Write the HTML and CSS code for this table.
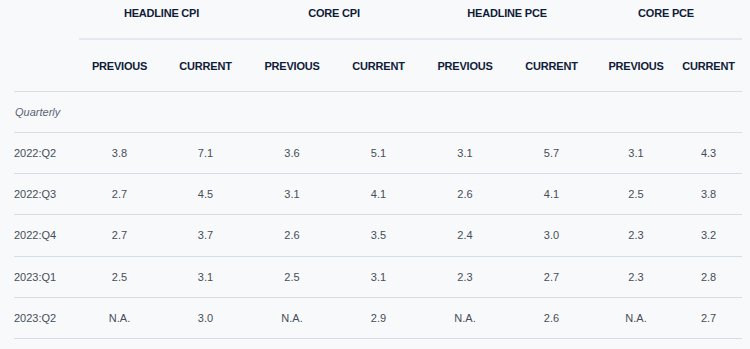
FILE: index.html
```html
<!DOCTYPE html>
<html>
<head>
<meta charset="utf-8">
<link rel="stylesheet" href="styles.css">
</head>
<body>
<div class="wrap">
<table class="infl">
<colgroup>
<col class="c0"><col class="c1"><col class="c2"><col class="c3"><col class="c4"><col class="c5"><col class="c6"><col class="c7"><col class="c8">
</colgroup>
<thead>
<tr class="grp">
<th class="blank"></th>
<th colspan="2">Headline CPI</th>
<th colspan="2">Core CPI</th>
<th colspan="2">Headline PCE</th>
<th colspan="2">Core PCE</th>
</tr>
<tr class="sub">
<th></th>
<th>Previous</th><th>Current</th>
<th>Previous</th><th>Current</th>
<th>Previous</th><th>Current</th>
<th>Previous</th><th>Current</th>
</tr>
</thead>
<tbody>
<tr class="sect"><td colspan="9">Quarterly</td></tr>
<tr><td>2022:Q2</td><td>3.8</td><td>7.1</td><td>3.6</td><td>5.1</td><td>3.1</td><td>5.7</td><td>3.1</td><td>4.3</td></tr>
<tr><td>2022:Q3</td><td>2.7</td><td>4.5</td><td>3.1</td><td>4.1</td><td>2.6</td><td>4.1</td><td>2.5</td><td>3.8</td></tr>
<tr><td>2022:Q4</td><td>2.7</td><td>3.7</td><td>2.6</td><td>3.5</td><td>2.4</td><td>3.0</td><td>2.3</td><td>3.2</td></tr>
<tr><td>2023:Q1</td><td>2.5</td><td>3.1</td><td>2.5</td><td>3.1</td><td>2.3</td><td>2.7</td><td>2.3</td><td>2.8</td></tr>
<tr><td>2023:Q2</td><td>N.A.</td><td>3.0</td><td>N.A.</td><td>2.9</td><td>N.A.</td><td>2.6</td><td>N.A.</td><td>2.7</td></tr>
</tbody>
</table>
</div>
</body>
</html>
```
FILE: styles.css
```css
html, body {
  margin: 0;
  padding: 0;
  background: #f8f9fb;
}
.wrap {
  padding-left: 14px;
}
.infl {
  border-collapse: collapse;
  table-layout: fixed;
  width: 728px;
  font-family: "Liberation Sans", Arial, sans-serif;
}
.c0 { width: 65px; }
.c1 { width: 81px; }
.c2 { width: 91px; }
.c3 { width: 82px; }
.c4 { width: 91px; }
.c5 { width: 82px; }
.c6 { width: 91px; }
.c7 { width: 78px; }
.c8 { width: 67px; }

.infl th {
  padding: 0;
  font-size: 11px;
  font-weight: 700;
  text-transform: uppercase;
  letter-spacing: -0.2px;
  color: #0f1c38;
  text-align: center;
}
.grp th {
  height: 39px;
  vertical-align: top;
  padding-top: 7px;
  padding-right: 7px;
  line-height: 13px;
  box-sizing: border-box;
  border-bottom: 2px solid #e4e9f0;
}
.grp th.blank {
  border-bottom: none;
}
.sub th {
  height: 51px;
  vertical-align: middle;
  border-bottom: 1px solid #d5dde7;
}
.infl td {
  padding: 0;
  height: 40.2px;
  font-size: 11px;
  color: #474d57;
  text-align: center;
  vertical-align: middle;
  border-bottom: 1px solid #d5dde7;
}
.infl td:first-child {
  text-align: left;
}
.sect td {
  height: 40px;
  font-style: italic;
  color: #5b6474;
  padding-left: 1px;
}
```
